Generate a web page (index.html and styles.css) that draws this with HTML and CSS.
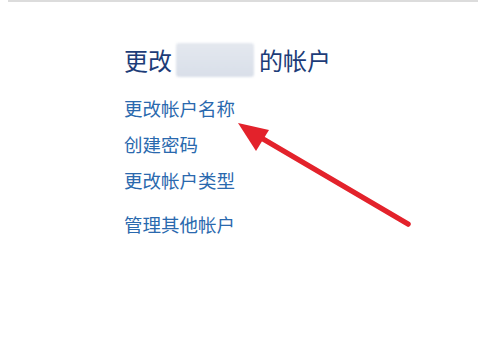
FILE: index.html
```html
<!DOCTYPE html>
<html lang="zh-CN">
<head>
<meta charset="utf-8">
<link rel="stylesheet" href="styles.css">
</head>
<body>
<div class="topline"></div>
<main class="panel">
  <h1 class="title"><span>更改</span><span class="blur"></span><span>的帐户</span></h1>
  <ul class="links">
    <li><a href="#">更改帐户名称</a></li>
    <li><a href="#">创建密码</a></li>
    <li><a href="#">更改帐户类型</a></li>
    <li class="gap"><a href="#">管理其他帐户</a></li>
  </ul>
</main>
<svg class="arrow" width="480" height="360" viewBox="0 0 480 360">
  <line x1="408" y1="224" x2="258" y2="136" stroke="#e3222b" stroke-width="5.5" stroke-linecap="round"/>
  <polygon points="238,123 269,130 256,151" fill="#e3222b"/>
</svg>
</body>
</html>
```
FILE: styles.css
```css
html, body {
  margin: 0;
  padding: 0;
  background: #ffffff;
  width: 480px;
  height: 360px;
  overflow: hidden;
}
body {
  position: relative;
  font-family: "Noto Sans CJK SC", "Noto Sans", sans-serif;
}
.topline {
  margin: 0 2px 0 8px;
  height: 2px;
  background: #dcdcdc;
}
.panel {
  padding: 40px 0 0 124px;
}
.title {
  margin: 0;
  display: flex;
  align-items: center;
  font-size: 24px;
  font-weight: 400;
  color: #1d3c78;
  line-height: 36px;
}
.blur {
  width: 78px;
  height: 34px;
  margin: 0 5px 0 4px;
  background: linear-gradient(180deg, #e4e8ef, #d9dfe9);
  border-radius: 3px;
  filter: blur(1px);
}
.links {
  list-style: none;
  margin: 12px 0 0 0;
  padding: 0;
}
.links li {
  height: 36px;
  line-height: 36px;
  font-size: 18.5px;
}
.links li.gap {
  margin-top: 8px;
}
.links a {
  color: #2a69ae;
  text-decoration: none;
}
.arrow {
  position: absolute;
  left: 0;
  top: 0;
  pointer-events: none;
}
```
